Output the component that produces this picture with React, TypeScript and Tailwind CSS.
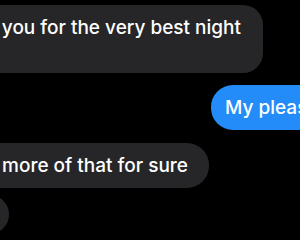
export default function App() {
  return (
    <div className="w-[300px] h-[240px] overflow-hidden bg-black flex flex-col text-white text-[19px] leading-[23px] font-medium font-['Inter',sans-serif]">
      {/* received */}
      <div className="mt-[5px] ml-[-237px] w-[500px] shrink-0 rounded-[20px] bg-[#262628] pl-4 pr-[22px] py-[11px]">
        <div className="text-right whitespace-nowrap">Thank you for the very best night</div>
        <div className="whitespace-nowrap">ever</div>
      </div>

      {/* sent */}
      <div className="mt-[12px] ml-[211px] w-[300px] shrink-0 rounded-[22px] bg-[#238cf8] pl-[14px] py-[11px] whitespace-nowrap">
        My pleasure
      </div>

      <div className="mt-[13px] ml-[-291px] w-[500px] shrink-0 rounded-[22px] bg-[#262628] pr-[21px] py-[11px] text-right whitespace-nowrap">
        Definitely more of that for sure
      </div>

      <div className="mt-[7px] ml-[-491px] w-[500px] h-[39px] shrink-0 rounded-[20px] bg-[#262628]" />
    </div>
  );
}
